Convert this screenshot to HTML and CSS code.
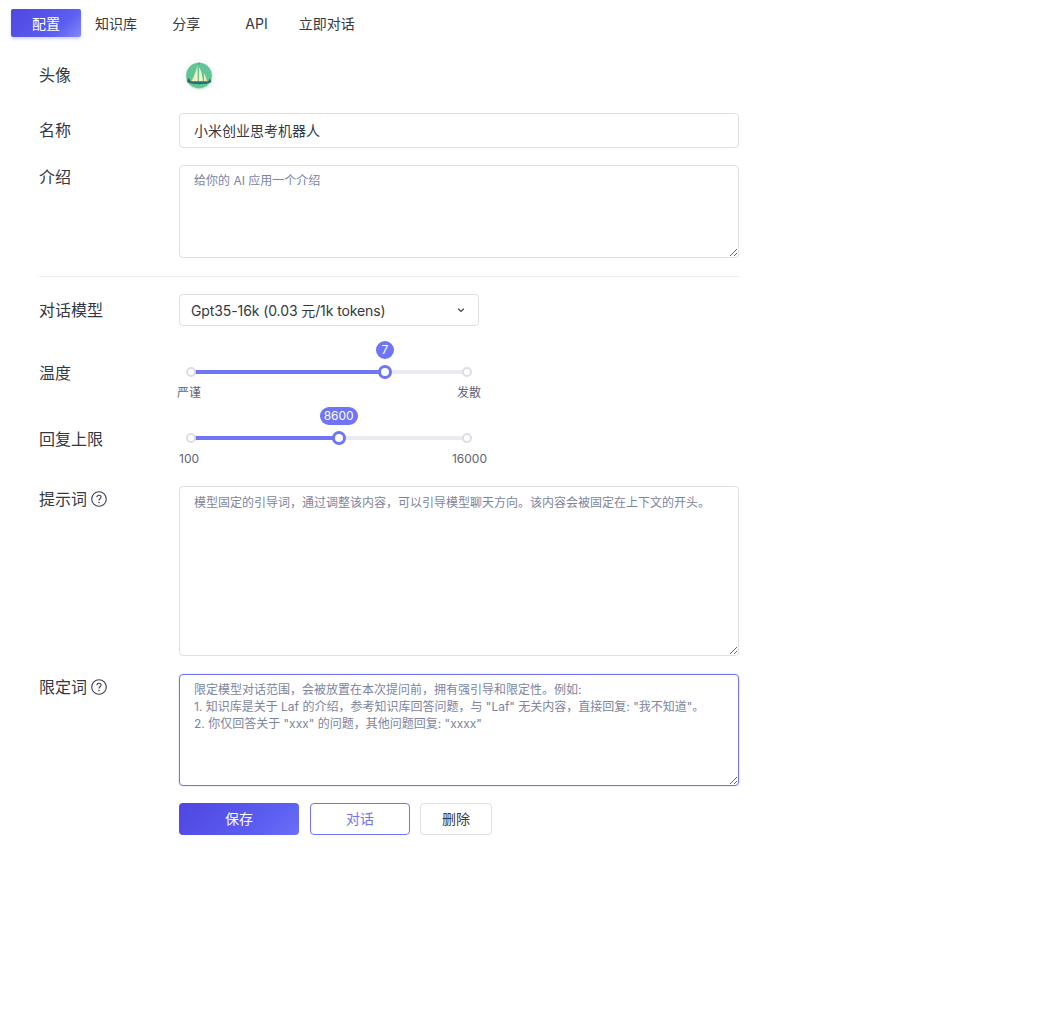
FILE: index.html
```html
<!DOCTYPE html>
<html lang="zh-CN">
<head>
  <meta charset="UTF-8">
  <meta name="viewport" content="width=device-width, initial-scale=1">
  <title>配置</title>
  <link rel="stylesheet" href="styles.css">
</head>
<body>
  <nav class="tabs">
    <div class="tab active">配置</div>
    <div class="tab">知识库</div>
    <div class="tab">分享</div>
    <div class="tab">API</div>
    <div class="tab">立即对话</div>
  </nav>

  <form class="settings">
    <div class="row row-avatar">
      <label class="label">头像</label>
      <svg class="avatar" width="36" height="36" viewBox="0 0 36 36">
        <circle cx="18" cy="18" r="17" fill="#fafcfb"/>
        <circle cx="18" cy="18" r="13.500" fill="#c9ecd9"/>
        <circle cx="18" cy="17.500" r="12.800" fill="#62c596"/>
        <path d="M18 4.500v2" stroke="#3f8f78" stroke-width="1"/>
        <path d="M16.500 7.500 L16.800 23 L10.500 23 C13 19 15 13 16.500 7.500Z" fill="#f3eebd"/>
        <path d="M18 9 C20.500 13 21.500 18 21.800 23 L18 23Z" fill="#f7f3cc"/>
        <path d="M23 15 C24.500 18 25.500 20.500 26 23 L23 23Z" fill="#e9e6b4"/>
        <path d="M6 24 L7 20 L8.500 21 L10 23.500 L27 23.500 L29 20.500 L30.500 24 C26 27 11 27 6 24Z" fill="#2a6f68"/>
      </svg>
    </div>

    <div class="row row-name">
      <label class="label">名称</label>
      <input class="input" type="text" value="小米创业思考机器人">
    </div>

    <div class="row row-intro">
      <label class="label">介绍</label>
      <textarea class="textarea intro" placeholder="给你的 AI 应用一个介绍"></textarea>
    </div>

    <hr class="divider">

    <div class="row row-model">
      <label class="label">对话模型</label>
      <div class="select">
        <span>Gpt35-16k (0.03 元/1k tokens)</span>
        <svg width="10" height="10" viewBox="0 0 10 10"><path d="M2.200 3.800 5 6.500l2.800-2.700" fill="none" stroke="#3c4150" stroke-width="1.200"/></svg>
      </div>
    </div>

    <div class="row row-slider">
      <label class="label">温度</label>
      <div class="slider">
        <div class="track">
          <div class="fill" style="width: 70.3%"></div>
          <span class="dot dot-start"></span>
          <span class="dot dot-end"></span>
          <span class="thumb" style="left: 70.3%"></span>
          <span class="bubble" style="left: 70.3%">7</span>
        </div>
        <div class="marks"><span>严谨</span><span>发散</span></div>
      </div>
    </div>

    <div class="row row-slider">
      <label class="label">回复上限</label>
      <div class="slider">
        <div class="track">
          <div class="fill" style="width: 53.5%"></div>
          <span class="dot dot-start"></span>
          <span class="dot dot-end"></span>
          <span class="thumb" style="left: 53.5%"></span>
          <span class="bubble" style="left: 53.5%">8600</span>
        </div>
        <div class="marks marks-num"><span>100</span><span>16000</span></div>
      </div>
    </div>

    <div class="row row-prompt">
      <label class="label">提示词
        <svg class="help" width="16" height="16" viewBox="0 0 16 16"><circle cx="8" cy="8" r="7.300" fill="none" stroke="#3c4150" stroke-width="1.100"/><path d="M5.900 6.300C5.900 5 6.900 4.200 8 4.200c1.200 0 2.100.8 2.100 1.900 0 1.600-2.100 1.700-2.100 3.300" fill="none" stroke="#3c4150" stroke-width="1.100"/><circle cx="8" cy="11.500" r=".8" fill="#3c4150"/></svg>
      </label>
      <textarea class="textarea prompt" placeholder="模型固定的引导词，通过调整该内容，可以引导模型聊天方向。该内容会被固定在上下文的开头。"></textarea>
    </div>

    <div class="row row-limit">
      <label class="label">限定词
        <svg class="help" width="16" height="16" viewBox="0 0 16 16"><circle cx="8" cy="8" r="7.300" fill="none" stroke="#3c4150" stroke-width="1.100"/><path d="M5.900 6.300C5.900 5 6.900 4.200 8 4.200c1.200 0 2.100.8 2.100 1.900 0 1.600-2.100 1.700-2.100 3.300" fill="none" stroke="#3c4150" stroke-width="1.100"/><circle cx="8" cy="11.500" r=".8" fill="#3c4150"/></svg>
      </label>
      <textarea class="textarea limit" placeholder='限定模型对话范围，会被放置在本次提问前，拥有强引导和限定性。例如:
1. 知识库是关于 Laf 的介绍，参考知识库回答问题，与 "Laf" 无关内容，直接回复: "我不知道"。
2. 你仅回答关于 "xxx" 的问题，其他问题回复: "xxxx"'></textarea>
    </div>

    <div class="actions">
      <button type="button" class="btn btn-save">保存</button>
      <button type="button" class="btn btn-chat">对话</button>
      <button type="button" class="btn btn-delete">删除</button>
    </div>
  </form>
</body>
</html>
```

FILE: styles.css
```css
* {
  padding: 0;
  margin: 0;
  box-sizing: border-box;
}
body {
  background: #fff;
  color: #333842;
  font-family: Inter, "Noto Sans CJK SC", sans-serif;
  font-size: 14px;
  height: 100vh;
  overflow: hidden;
}
.tabs {
  display: flex;
  padding: 9px 0 0 11px;
}
.tab {
  width: 70.2px;
  height: 28px;
  line-height: 30px;
  text-align: center;
  font-size: 14px;
  border-radius: 2px;
}
.tab.active {
  width: 70px;
  color: #fff;
  background: linear-gradient(135deg, #4f46e0 0%, #5b5ff2 70%, #8488f8 100%);
  box-shadow: 0 2px 3px rgba(80, 80, 200, 0.25);
}
.settings {
  width: 739px;
  padding-left: 39px;
}
.row {
  display: flex;
}
.label {
  flex: 0 0 140px;
  font-size: 16px;
  line-height: 22px;
  color: #333842;
  display: flex;
  align-items: center;
  align-self: flex-start;
  gap: 4px;
}
.row-avatar {
  margin-top: 20px;
  height: 36px;
  align-items: center;
}
.row-avatar .label {
  align-self: center;
}
.avatar {
  display: block;
  margin: 2px 0 0 2px;
}
.row-name {
  margin-top: 20px;
  align-items: center;
}
.row-name .label {
  align-self: center;
  margin-bottom: 2px;
}
.input {
  flex: 1;
  height: 35px;
  padding: 0 14px 2px;
  border: 1px solid #dee0e2;
  border-radius: 4px;
  font: inherit;
  color: #333842;
  outline: none;
}
.textarea {
  flex: 1;
  display: block;
  padding: 7px 14px;
  border: 1px solid #dee0e2;
  border-radius: 4px;
  font-family: inherit;
  font-size: 12px;
  line-height: 16.8px;
  color: #333842;
  outline: none;
}
.textarea::placeholder {
  color: #7d849e;
  opacity: 1;
}
.row-intro {
  margin-top: 17px;
}
.row-intro .label {
  margin-top: 1px;
}
.intro {
  height: 93px;
}
.divider {
  border: none;
  border-top: 1px solid #eceef1;
  margin: 18px 0 17px;
}
.row-model {
  align-items: center;
}
.row-model .label {
  align-self: center;
}
.select {
  width: 300px;
  height: 32px;
  padding: 0 12px 0 11px;
  border: 1px solid #dee0e2;
  border-radius: 4px;
  font-size: 14px;
  letter-spacing: -0.1px;
  display: flex;
  align-items: center;
  justify-content: space-between;
}
.row-slider {
  margin-top: 15px;
  height: 60px;
}
.row-slider + .row-slider {
  margin-top: 6px;
}
.row-slider .label {
  margin-top: 21px;
}
.slider {
  width: 300px;
  padding-top: 29px;
}
.track {
  position: relative;
  height: 4px;
  margin: 0 12px;
  background: #eaebf1;
  border-radius: 2px;
}
.fill {
  height: 4px;
  background: #6f75f5;
}
.dot {
  position: absolute;
  top: -3px;
  width: 10px;
  height: 10px;
  background: #fff;
  border: 2px solid #dcdee6;
  border-radius: 50%;
}
.dot-start {
  left: -5px;
}
.dot-end {
  right: -5px;
}
.thumb {
  position: absolute;
  top: -5px;
  width: 14px;
  height: 14px;
  margin-left: -7px;
  background: #fff;
  border: 3px solid #6f75f5;
  border-radius: 50%;
}
.bubble {
  position: absolute;
  top: -29px;
  height: 18px;
  min-width: 18px;
  padding: 0 4px;
  transform: translateX(-50%);
  background: #6f75f5;
  color: #fff;
  font-size: 12px;
  line-height: 18px;
  text-align: center;
  border-radius: 9px;
}
.marks {
  display: flex;
  justify-content: space-between;
  margin: 11px -2px 0;
  font-size: 12px;
  line-height: 16px;
  color: #5f6472;
}
.marks-num {
  margin-right: -8px;
  margin-left: 0;
}
.row-prompt {
  margin-top: 19px;
}
.row-prompt .label,
.row-limit .label {
  margin-top: 2px;
}
.prompt {
  height: 170px;
  padding-top: 8px;
}
.row-limit {
  margin-top: 18px;
}
.limit {
  height: 112px;
  border-color: #6f75f5;
  box-shadow: 0 0 0 1px rgba(111, 117, 245, 0.12);
}
.actions {
  display: flex;
  gap: 10px;
  margin: 17px 0 0 140px;
}
.btn {
  height: 32px;
  padding-bottom: 2px;
  border-radius: 4px;
  font-family: inherit;
  font-size: 14px;
  background: #fff;
  cursor: pointer;
}
.btn-save {
  width: 120px;
  border: none;
  color: #fff;
  background: linear-gradient(135deg, #4f46e0 0%, #5b5ff2 70%, #6a70f6 100%);
}
.btn-chat {
  width: 100px;
  margin-left: 1px;
  border: 1px solid #6f75f5;
  color: #6f75f5;
}
.btn-delete {
  width: 72px;
  border: 1px solid #dee0e2;
  color: #333842;
}
```
